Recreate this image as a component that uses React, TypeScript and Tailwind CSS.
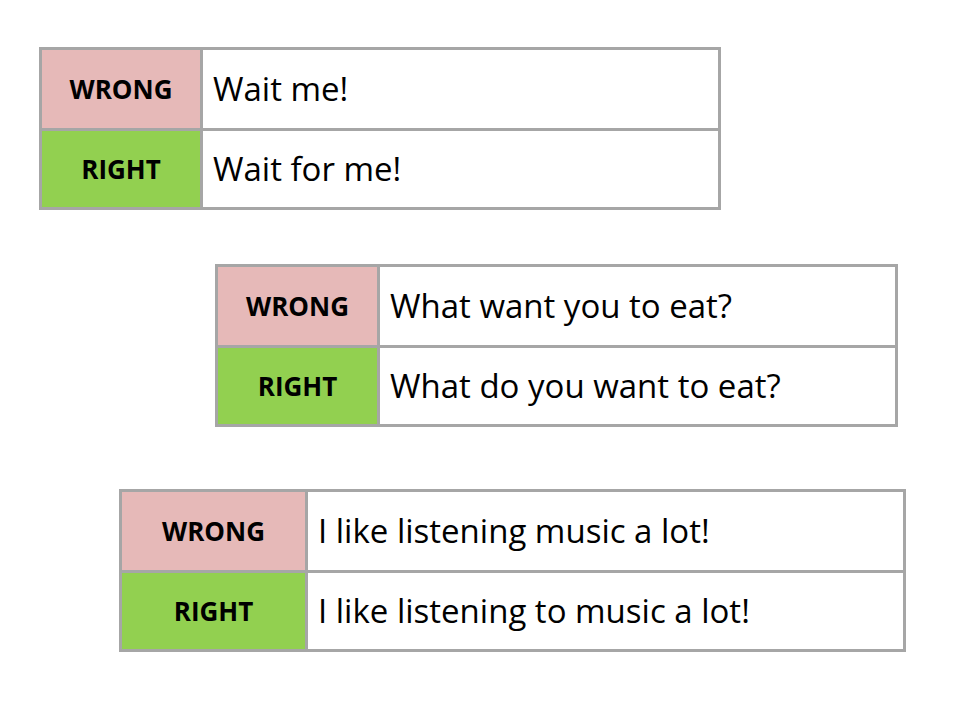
import React from "react";

type Pair = { wrong: string; right: string };

function Table({ pair, labelW, width, ml }: { pair: Pair; labelW: string; width: string; ml: string }) {
  return (
    <div className={`${width} ${ml} border-[3px] border-[#a6a6a6] bg-white`}>
      <div className="flex h-[81px] border-b-[3px] border-[#a6a6a6]">
        <div className={`${labelW} shrink-0 flex items-center justify-center bg-[#e6b9b8] border-r-[3px] border-[#a6a6a6] font-bold text-[26px] text-black`}>
          WRONG
        </div>
        <div className="flex-1 flex items-center pl-[10px] text-[33px] text-black">{pair.wrong}</div>
      </div>
      <div className="flex h-[76px]">
        <div className={`${labelW} shrink-0 flex items-center justify-center bg-[#92d050] border-r-[3px] border-[#a6a6a6] font-bold text-[26px] text-black`}>
          RIGHT
        </div>
        <div className="flex-1 flex items-center pl-[10px] text-[33px] text-black">{pair.right}</div>
      </div>
    </div>
  );
}

export default function App() {
  return (
    <div className="w-[960px] h-[720px] bg-white pt-[47px] flex flex-col" style={{ fontFamily: "'Open Sans', Lato, sans-serif" }}>
      <Table pair={{ wrong: "Wait me!", right: "Wait for me!" }} labelW="w-[161px]" width="w-[682px]" ml="ml-[39px]" />
      <div className="h-[54px]" />
      <Table pair={{ wrong: "What want you to eat?", right: "What do you want to eat?" }} labelW="w-[162px]" width="w-[683px]" ml="ml-[215px]" />
      <div className="h-[62px]" />
      <Table pair={{ wrong: "I like listening music a lot!", right: "I like listening to music a lot!" }} labelW="w-[186px]" width="w-[787px]" ml="ml-[119px]" />
    </div>
  );
}
